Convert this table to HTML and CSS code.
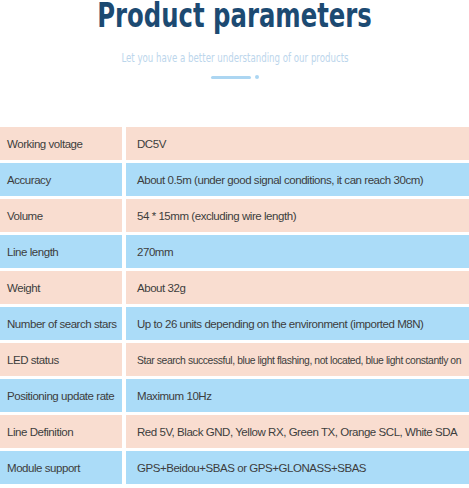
FILE: index.html
```html
<!DOCTYPE html>
<html lang="en">

<head>
    <meta charset="UTF-8">
    <meta name="viewport" content="width=device-width, initial-scale=1.0">
    <title>Product parameters</title>
    <link rel="stylesheet" href="styles.css">
</head>

<body>
    <div class="head">
        <h1 class="head-title">Product parameters</h1>
        <p class="head-sub">Let you have a better understanding of our products</p>
        <div class="head-line">
            <span class="line-bar"></span>
            <span class="line-dot"></span>
        </div>
    </div>
    <div class="params">
        <div class="row peach">
            <div class="cell name">Working voltage</div>
            <div class="cell value">DC5V</div>
        </div>
        <div class="row blue">
            <div class="cell name">Accuracy</div>
            <div class="cell value">About 0.5m (under good signal conditions, it can reach 30cm)</div>
        </div>
        <div class="row peach">
            <div class="cell name">Volume</div>
            <div class="cell value">54 * 15mm (excluding wire length)</div>
        </div>
        <div class="row blue">
            <div class="cell name">Line length</div>
            <div class="cell value">270mm</div>
        </div>
        <div class="row peach">
            <div class="cell name">Weight</div>
            <div class="cell value">About 32g</div>
        </div>
        <div class="row blue">
            <div class="cell name">Number of search stars</div>
            <div class="cell value">Up to 26 units depending on the environment (imported M8N)</div>
        </div>
        <div class="row peach">
            <div class="cell name">LED status</div>
            <div class="cell value"><span class="squeeze">Star search successful, blue light flashing, not located, blue light constantly on</span></div>
        </div>
        <div class="row blue">
            <div class="cell name">Positioning update rate</div>
            <div class="cell value">Maximum 10Hz</div>
        </div>
        <div class="row peach">
            <div class="cell name">Line Definition</div>
            <div class="cell value">Red 5V, Black GND, Yellow RX, Green TX, Orange SCL, White SDA</div>
        </div>
        <div class="row blue">
            <div class="cell name">Module support</div>
            <div class="cell value">GPS+Beidou+SBAS or GPS+GLONASS+SBAS</div>
        </div>
    </div>
</body>

</html>
```

FILE: styles.css
```css
* {
    margin: 0;
    padding: 0;
}

body {
    background: #fff;
    font-family: "Liberation Sans", Arial, sans-serif;
    color: #3d3d3d;
    width: 469px;
    overflow: hidden;
}

.head {
    display: flex;
    flex-direction: column;
    align-items: center;
    height: 127px;
}

.head-title {
    font-family: "DejaVu Sans Condensed", sans-serif;
    font-weight: bold;
    font-size: 33px;
    line-height: 32px;
    color: #1c4a72;
    white-space: nowrap;
    transform: scaleX(0.82);
}

.head-sub {
    font-family: "DejaVu Sans Condensed", sans-serif;
    font-size: 12px;
    line-height: 14px;
    color: #bcd6ec;
    margin-top: 19px;
    white-space: nowrap;
    transform: scaleX(0.8);
}

.head-line {
    display: flex;
    align-items: center;
    gap: 4px;
    margin-top: 10px;
}

.line-bar {
    width: 40px;
    height: 3px;
    border-radius: 2px;
    background: #acd6f2;
}

.line-dot {
    width: 4px;
    height: 4px;
    border-radius: 50%;
    background: #acd6f2;
}

.params {
    display: flex;
    flex-direction: column;
    gap: 3px;
}

.row {
    display: flex;
    gap: 4px;
    height: 33px;
}

.cell {
    display: flex;
    align-items: center;
    font-size: 11.5px;
    letter-spacing: -0.45px;
    white-space: nowrap;
}

.name {
    flex-shrink: 0;
    width: 122px;
    padding-left: 7px;
    box-sizing: border-box;
}

.value {
    flex: 1;
    min-width: 0;
    padding-left: 11px;
}

.squeeze {
    display: inline-block;
    transform: scaleX(0.9);
    transform-origin: left center;
}

.peach .cell {
    background: #f9ddd0;
}

.blue .cell {
    background: #abdcf8;
}
```
